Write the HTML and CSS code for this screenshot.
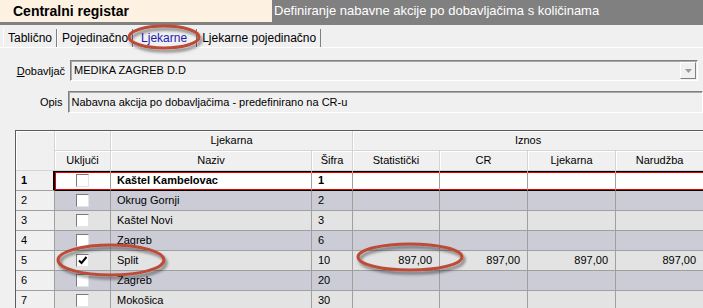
FILE: index.html
```html
<!DOCTYPE html>
<html lang="hr">
  <head>
    <meta charset="UTF-8" />
    <meta name="viewport" content="width=device-width, initial-scale=1.0" />
    <title>Centralni registar</title>
    <link rel="stylesheet" href="styles.css">
  </head>
  <body>
    <header class="title-bar">
      <div class="brand">Centralni registar</div>
      <div class="page-title">Definiranje nabavne akcije po dobavljačima s količinama</div>
    </header>

    <nav class="tabs">
      <span class="tab">Tablično</span>
      <span class="tab">Pojedinačno</span>
      <span class="tab active">Ljekarne</span>
      <span class="tab">Ljekarne pojedinačno</span>
    </nav>

    <main class="panel">
      <div class="field">
        <label class="field-label"><u>D</u>obavljač</label>
        <div class="field-box combo">
          <span>MEDIKA ZAGREB D.D</span>
          <span class="combo-btn">
            <svg width="7" height="4" viewBox="0 0 7 4"><path d="M0 0h7L3.5 4z" fill="#9a9a9a"/></svg>
          </span>
        </div>
      </div>

      <div class="field">
        <label class="field-label">Opis</label>
        <div class="field-box wide">Nabavna akcija po dobavljačima - predefinirano na CR-u</div>
      </div>

      <table class="grid">
        <colgroup>
          <col style="width: 39px">
          <col style="width: 56px">
          <col style="width: 201px">
          <col style="width: 41px">
          <col style="width: 87px">
          <col style="width: 88px">
          <col style="width: 88px">
          <col style="width: 88px">
        </colgroup>
        <thead>
          <tr>
            <th rowspan="2"></th>
            <th></th>
            <th colspan="2">Ljekarna</th>
            <th colspan="4">Iznos</th>
          </tr>
          <tr>
            <th>Uključi</th>
            <th>Naziv</th>
            <th>Šifra</th>
            <th>Statistički</th>
            <th>CR</th>
            <th>Ljekarna</th>
            <th>Narudžba</th>
          </tr>
        </thead>
        <tbody>
          <tr class="current">
            <td class="rh">1</td>
            <td class="chk"><span class="box"></span></td>
            <td>Kaštel Kambelovac</td>
            <td>1</td>
            <td class="num"></td><td class="num"></td><td class="num"></td><td class="num"></td>
          </tr>
          <tr class="even">
            <td class="rh">2</td>
            <td class="chk"><span class="box"></span></td>
            <td>Okrug Gornji</td>
            <td>2</td>
            <td class="num"></td><td class="num"></td><td class="num"></td><td class="num"></td>
          </tr>
          <tr class="odd">
            <td class="rh">3</td>
            <td class="chk"><span class="box"></span></td>
            <td>Kaštel Novi</td>
            <td>3</td>
            <td class="num"></td><td class="num"></td><td class="num"></td><td class="num"></td>
          </tr>
          <tr class="even">
            <td class="rh">4</td>
            <td class="chk"><span class="box"></span></td>
            <td>Zagreb</td>
            <td>6</td>
            <td class="num"></td><td class="num"></td><td class="num"></td><td class="num"></td>
          </tr>
          <tr class="odd">
            <td class="rh">5</td>
            <td class="chk">
              <span class="box">
                <svg width="11" height="11" viewBox="0 0 11 11"><path d="M2 5.5l2.5 2.5L9.5 2" fill="none" stroke="#000" stroke-width="2"/></svg>
              </span>
            </td>
            <td>Split</td>
            <td>10</td>
            <td class="num">897,00</td>
            <td class="num">897,00</td>
            <td class="num">897,00</td>
            <td class="num">897,00</td>
          </tr>
          <tr class="even">
            <td class="rh">6</td>
            <td class="chk"><span class="box"></span></td>
            <td>Zagreb</td>
            <td>20</td>
            <td class="num"></td><td class="num"></td><td class="num"></td><td class="num"></td>
          </tr>
          <tr class="odd">
            <td class="rh">7</td>
            <td class="chk"><span class="box"></span></td>
            <td>Mokošica</td>
            <td>30</td>
            <td class="num"></td><td class="num"></td><td class="num"></td><td class="num"></td>
          </tr>
        </tbody>
      </table>
    </main>

    <!-- annotation rings drawn over the screenshot -->
    <svg class="marks" width="703" height="308" viewBox="0 0 703 308">
      <defs>
        <filter id="shadow" x="-20%" y="-40%" width="140%" height="180%">
          <feDropShadow dx="2" dy="3" stdDeviation="1.5" flood-color="#000" flood-opacity="0.45"/>
        </filter>
      </defs>
      <g fill="none" stroke="#bc4b38" stroke-width="3" filter="url(#shadow)">
        <ellipse cx="164" cy="37" rx="35" ry="11"/>
        <ellipse cx="111" cy="260" rx="53" ry="15"/>
        <ellipse cx="410" cy="257" rx="52" ry="13"/>
      </g>
    </svg>
  </body>
</html>
```

FILE: styles.css
```css
* {
  margin: 0;
  padding: 0;
  box-sizing: border-box;
}

body {
  position: relative;
  width: 703px;
  height: 308px;
  overflow: hidden;
  background-color: #f0f0f0;
  font-family: "Liberation Sans", Arial, sans-serif;
  font-size: 11px;
  color: #000;
}

.title-bar {
  display: flex;
  height: 25px;
  border-bottom: 3px solid #808080;
}

.brand {
  width: 272px;
  padding-left: 13px;
  background-color: #fdf1e1;
  font-size: 14px;
  font-weight: bold;
  line-height: 22px;
}

.page-title {
  flex: 1;
  padding-left: 2px;
  background-color: #808080;
  color: #fff;
  font-size: 13px;
  line-height: 22px;
  white-space: nowrap;
}

.tabs {
  display: flex;
  height: 23px;
  padding: 4px 0 0 3px;
  border-bottom: 1px solid #fff;
}

.tab {
  height: 18px;
  padding: 0 4px 0 5px;
  border-right: 1px solid #808080;
  box-shadow: inset 1px 0 #fff;
  font-size: 12px;
  line-height: 18px;
  white-space: nowrap;
}

.tab.active {
  padding: 0 9px 0 8px;
  color: #1c1cb4;
}

.panel {
  padding-top: 12px;
}

.field {
  display: flex;
  align-items: center;
  margin-bottom: 10px;
}

.field-label {
  width: 65px;
  margin-right: 5px;
  text-align: right;
}

.field-box {
  height: 21px;
  padding-left: 3px;
  border: 1px solid;
  border-color: #808080 #fff #fff #808080;
  box-shadow: inset 1px 1px #a8a8a8;
  line-height: 19px;
  white-space: nowrap;
}

.combo {
  display: flex;
  align-items: center;
  justify-content: space-between;
  width: 628px;
  padding-right: 1px;
}

.combo-btn {
  display: flex;
  align-items: center;
  justify-content: center;
  width: 16px;
  height: 17px;
  border: 1px solid;
  border-color: #fff #808080 #808080 #fff;
  background-color: #f0f0f0;
}

.wide {
  width: 660px;
  height: 22px;
  line-height: 20px;
}

.grid {
  margin: 17px 0 0 15px;
  width: 689px;
  table-layout: fixed;
  border-collapse: separate;
  border-spacing: 0;
  border-top: 1px solid #5c5c5c;
  border-left: 1px solid #5c5c5c;
}

.grid th,
.grid td {
  height: 19px;
  padding: 0 6px;
  line-height: 19px;
  white-space: nowrap;
  overflow: hidden;
}

.grid th {
  background-color: #f0f0f0;
  font-weight: normal;
  text-align: center;
  border-right: 1px solid #d4d4d4;
  border-bottom: 1px solid #d4d4d4;
  box-shadow: inset 1px 1px #fff;
}

.grid td {
  text-align: left;
  border-right: 1px solid #a0a0a0;
  border-bottom: 1px solid #a0a0a0;
}

.grid td.rh {
  padding-left: 5px;
  background-color: #f0f0f0;
}

.grid td.chk {
  text-align: center;
}

.grid td.num {
  text-align: right;
  padding-right: 7px;
}

tr.even td {
  background-color: #cbccd6;
}

tr.odd td {
  background-color: #e3e3e3;
}

tr.current td {
  background-color: #fff;
  font-weight: bold;
  border-bottom-color: #000;
  box-shadow: inset 0 1px #000, inset 0 2px #e00000, inset 0 -1px #e00000;
}

tr.current td.chk {
  box-shadow: inset 0 1px #000, inset 0 2px #e00000, inset 0 -1px #e00000, inset 1px 0 #e00000;
}

tr.current td.rh {
  border-bottom-color: #a0a0a0;
  border-right-color: #000;
  box-shadow: inset -1px 0 #000;
}

.box {
  display: inline-block;
  width: 13px;
  height: 13px;
  margin-top: 3px;
  border: 1px solid;
  border-color: #7a7a7a #e4e4e4 #e4e4e4 #7a7a7a;
  background-color: #fff;
  vertical-align: top;
}

.box svg {
  display: block;
}

.marks {
  position: absolute;
  top: 0;
  left: 0;
  pointer-events: none;
}
```
